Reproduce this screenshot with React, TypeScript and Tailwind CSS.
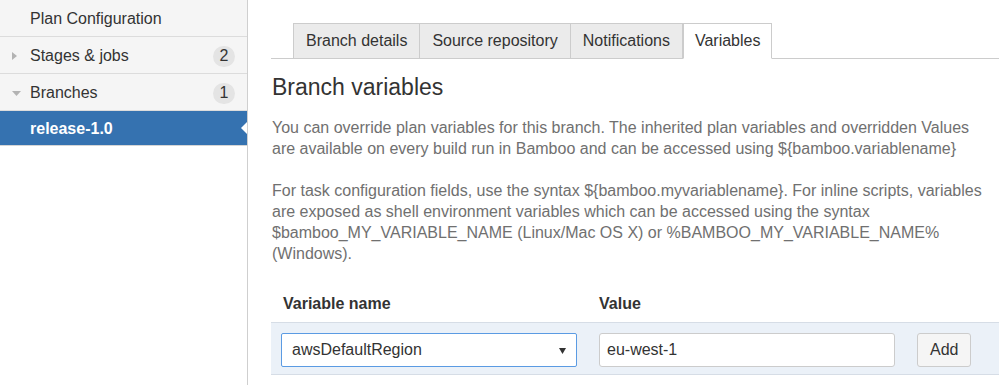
const navItems = [
  { label: "Plan Configuration", badge: null, caret: null },
  { label: "Stages & jobs", badge: "2", caret: "right" },
  { label: "Branches", badge: "1", caret: "down" },
];

const tabs = ["Branch details", "Source repository", "Notifications", "Variables"];

const Caret = ({ dir }: { dir: string | null }) => {
  if (dir === "right")
    return (
      <svg width="5" height="8" viewBox="0 0 5 8">
        <path d="M0 0 L5 4 L0 8 Z" fill="#b3b3b3" />
      </svg>
    );
  if (dir === "down")
    return (
      <svg width="9" height="5" viewBox="0 0 9 5">
        <path d="M0 0 L9 0 L4.5 5 Z" fill="#b3b3b3" />
      </svg>
    );
  return null;
};

const App = () => {
  return (
    <div className="flex w-[999px] h-[385px] overflow-hidden bg-white text-[16px] text-[#333] font-['Liberation_Sans',Arial,sans-serif]">
      <aside className="w-[248px] shrink-0 border-r border-[#cfcfcf]">
        {navItems.map((item) => (
          <div key={item.label} className="flex items-center h-[37px] pt-[2px] border-b border-[#dcdcdc] bg-[#f5f5f5]">
            <div className="w-[30px] flex items-center pl-[12px]">
              <Caret dir={item.caret} />
            </div>
            <span className="flex-1">{item.label}</span>
            {item.badge && (
              <span className="mr-[12px] w-[22px] h-[21px] rounded-full bg-[#e4e4e4] flex items-center justify-center">
                {item.badge}
              </span>
            )}
          </div>
        ))}
        <div className="relative flex items-center h-[35px] pt-[2px] border-b border-[#d5d5d5] bg-[#3572b0] pl-[30px] font-bold text-white">
          release-1.0
          <span className="absolute right-0 top-[11px] w-0 h-0 border-y-[6px] border-y-transparent border-r-[6px] border-r-white" />
        </div>
      </aside>

      <main className="flex-1 pl-[23px] pt-[23px]">
        <div className="flex border-b border-[#ccc] pl-[22px]">
          {tabs.map((t) => {
            const active = t === "Variables";
            return (
              <div
                key={t}
                className={
                  active
                    ? "-mb-px h-[36px] px-[11px] flex items-center border border-[#ccc] border-b-white bg-white"
                    : "-mb-px h-[36px] px-[12px] last:px-[11px] flex items-center border border-l-0 first:border-l border-[#ccc] bg-[#ebebeb]"
                }
              >
                {t}
              </div>
            );
          })}
        </div>

        <div className="pl-px">
          <h2 className="mt-[14px] text-[23px] leading-[28px]">Branch variables</h2>
          <p className="mt-[16px] leading-[21px] text-[#707070] pr-[10px]">
            You can override plan variables for this branch. The inherited plan variables and overridden Values are available on every build run in Bamboo and can be accessed using {"${bamboo.variablename}"}
          </p>
          <p className="mt-[21px] leading-[21px] text-[#707070] pr-[10px]">
            For task configuration fields, use the syntax {"${bamboo.myvariablename}"}. For inline scripts, variables are exposed as shell environment variables which can be accessed using the syntax $bamboo_MY_VARIABLE_NAME (Linux/Mac OS X) or %BAMBOO_MY_VARIABLE_NAME% (Windows).
          </p>
        </div>

        <div className="mt-[29px] flex font-bold leading-[21px] pl-[12px]">
          <div className="w-[316px]">Variable name</div>
          <div>Value</div>
        </div>

        <div className="mt-[8px] flex items-start gap-[22px] border-y border-[#d6dde6] bg-[#ebf1f8] pl-[10px] pt-[10px] pb-[7px]">
          <div className="relative w-[296px] h-[34px] rounded-[2px] border border-[#5b9be3] bg-white flex items-center pl-[10px]">
            awsDefaultRegion
            <svg className="absolute right-[10px] top-[14px]" width="7" height="6" viewBox="0 0 7 6">
              <path d="M0 0 L7 0 L3.5 6 Z" fill="#333" />
            </svg>
          </div>
          <div className="w-[296px] h-[34px] rounded-[3px] border border-[#ccc] bg-white flex items-center pl-[7px]">
            eu-west-1
          </div>
          <button className="h-[34px] px-[12px] rounded-[3px] border border-[#ccc] bg-[#f5f5f5]">Add</button>
        </div>
      </main>
    </div>
  );
};

export default App;
